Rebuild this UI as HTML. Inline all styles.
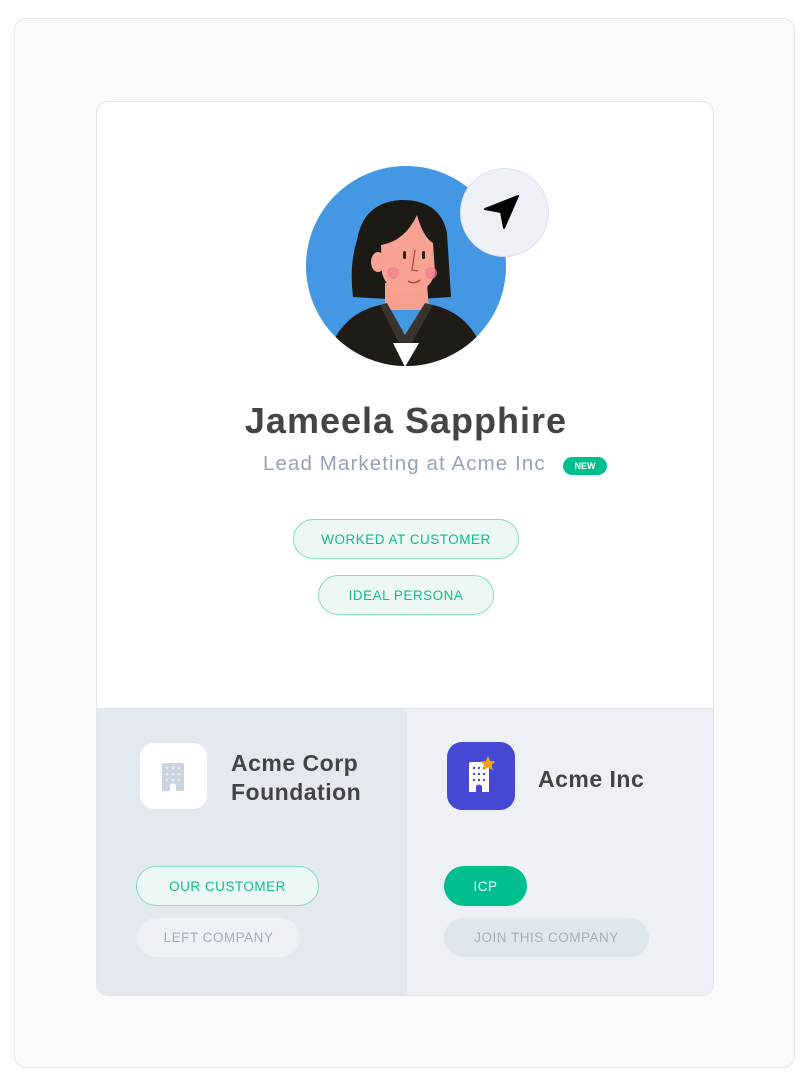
<!DOCTYPE html>
<html><head><meta charset="utf-8"><style>
*{box-sizing:border-box;margin:0;padding:0}
body{width:810px;height:1080px;background:#fff;font-family:"Liberation Sans",sans-serif;position:relative;overflow:hidden}
.frame{position:absolute;left:14px;top:18px;width:781px;height:1050px;background:#f9fafc;border:1px solid #e3e7ee;border-radius:12px}
.card{position:absolute;left:96px;top:101px;width:618px;height:895px;background:#fff;border:1px solid #e1e6ed;border-radius:12px;overflow:hidden}
.abs{position:absolute}
.pill{position:absolute;border-radius:20px;display:flex;align-items:center;justify-content:center;font-size:13.5px;letter-spacing:.5px}
.g{background:#edf7f4;border:1px solid #86dcc4;color:#14b98b}
.name{position:absolute;left:0;width:618px;text-align:center;top:298px;font-size:36px;font-weight:bold;color:#444;letter-spacing:1px}
.co{position:absolute;font-size:23px;font-weight:bold;color:#444;line-height:29px;letter-spacing:.5px}
</style></head><body>
<div class="frame"></div>
<div class="card">
  <svg class="abs" style="left:208px;top:63px" width="202" height="202" viewBox="0 0 202 202">
    <defs><clipPath id="c"><circle cx="101" cy="101" r="100"/></clipPath></defs>
    <g clip-path="url(#c)">
      <rect width="202" height="202" fill="#4397e3"/>
      <path d="M52 75 Q58 38 95 35 Q135 34 142 68 L146 132 L100 135 L48 132 Q44 100 52 75Z" fill="#1c1a14"/>
      <path d="M80 145 L80 118 L122 118 L124 145Z" fill="#f6a08f"/>
      <path d="M76 80 Q100 76 112 50 Q118 72 128 78 L130 108 Q124 128 104 128 Q82 127 77 108Z" fill="#f8a293"/>
      <ellipse cx="73" cy="97" rx="7" ry="10" fill="#f8a293"/>
      <rect x="98" y="86" width="3" height="8" rx="1.5" fill="#2a1f1a"/>
      <rect x="117" y="86" width="3" height="8" rx="1.5" fill="#2a1f1a"/>
      <path d="M110 85 L107 105 L113 106" stroke="#b04a40" stroke-width="1.3" fill="none"/>
      <circle cx="88" cy="108" r="6" fill="#f27b8a" opacity=".7"/>
      <circle cx="126" cy="108" r="6" fill="#f27b8a" opacity=".7"/>
      <path d="M103 116 Q109 120 115 115" stroke="#b04a40" stroke-width="1.5" fill="none"/>
      <path d="M20 202 Q30 150 75 140 L100 175 L128 140 Q172 150 182 202Z" fill="#1f1c17"/>
      <path d="M75 140 L100 190 L128 140 L120 138 L100 170 L82 138Z" fill="#38332c"/>
      <path d="M88 178 L100 202 L114 178Z" fill="#fff"/>
    </g>
  </svg>
  <div class="abs" style="left:363px;top:66px;width:89px;height:89px;border-radius:50%;background:#edf0f4;border:1px solid #dde3ea"></div>
  <svg class="abs" style="left:387px;top:92px" width="36" height="36" viewBox="0 0 36 36"><path d="M1 15 L34 2 L20 34 L17 18Z" fill="#000" stroke="#000" stroke-width="2" stroke-linejoin="round"/></svg>
  <div class="name">Jameela Sapphire</div>
  <div class="abs" style="left:166px;top:350px;font-size:20.5px;color:#97a3b5;letter-spacing:1.1px">Lead Marketing at Acme Inc</div>
  <div class="abs" style="left:466px;top:355px;width:44px;height:18px;border-radius:9px;background:#00bf8f;color:#fff;font-size:9px;font-weight:bold;display:flex;align-items:center;justify-content:center">NEW</div>
  <div class="pill g" style="left:196px;top:417px;width:226px;height:40px">WORKED AT CUSTOMER</div>
  <div class="pill g" style="left:221px;top:473px;width:176px;height:40px">IDEAL PERSONA</div>
  <div class="abs" style="left:0;top:606px;width:310px;height:289px;background:#e4e9f0;border-top:1px solid #dde3ea"></div>
  <div class="abs" style="left:310px;top:606px;width:308px;height:289px;background:#edf0f4;border-top:1px solid #dde3ea"></div>
  <div class="abs" style="left:43px;top:641px;width:67px;height:66px;border-radius:14px;background:#fff"></div>
  <svg class="abs" style="left:65px;top:661px" width="22" height="28" viewBox="0 0 22 28"><path d="M0 2 Q0 0 2 0 L20 0 Q22 0 22 2 L22 28 L14 28 L14 22 Q11 19 8 22 L8 28 L0 28Z" fill="#cbd3df"/><g fill="#e9edf2"><circle cx="5" cy="5" r="1.3"/><circle cx="11" cy="5" r="1.3"/><circle cx="17" cy="5" r="1.3"/><circle cx="5" cy="11" r="1.3"/><circle cx="11" cy="11" r="1.3"/><circle cx="17" cy="11" r="1.3"/><circle cx="5" cy="17" r="1.3"/><circle cx="11" cy="17" r="1.3"/><circle cx="17" cy="17" r="1.3"/></g></svg>
  <div class="co" style="left:134px;top:647px">Acme Corp<br>Foundation</div>
  <div class="abs" style="left:350px;top:640px;width:68px;height:68px;border-radius:15px;background:#4648d4"></div>
  <svg class="abs" style="left:370px;top:654px" width="30" height="36" viewBox="0 0 30 36"><path d="M2 8 Q2 6 4 6 L20 6 Q22 6 22 8 L22 36 L15 36 L15 30 Q12 27 9 30 L9 36 L2 36Z" fill="#fff"/><g fill="#4648d4"><circle cx="7" cy="12" r="1.2"/><circle cx="12" cy="12" r="1.2"/><circle cx="17" cy="12" r="1.2"/><circle cx="7" cy="18" r="1.2"/><circle cx="12" cy="18" r="1.2"/><circle cx="17" cy="18" r="1.2"/><circle cx="7" cy="24" r="1.2"/><circle cx="12" cy="24" r="1.2"/><circle cx="17" cy="24" r="1.2"/></g><path d="M21 0 L23.3 5 L28.5 5.5 L24.6 9 L25.7 14.2 L21 11.5 L16.3 14.2 L17.4 9 L13.5 5.5 L18.7 5Z" fill="#f7a11a"/></svg>
  <div class="co" style="left:441px;top:663px">Acme Inc</div>
  <div class="pill g" style="left:39px;top:764px;width:183px;height:40px">OUR CUSTOMER</div>
  <div class="pill" style="left:40px;top:816px;width:163px;height:39px;background:#edf0f4;color:#a5aebd">LEFT COMPANY</div>
  <div class="pill" style="left:347px;top:764px;width:83px;height:40px;background:#00bf8f;color:#fff">ICP</div>
  <div class="pill" style="left:347px;top:816px;width:205px;height:39px;background:#e0e6ee;color:#a5aebd">JOIN THIS COMPANY</div>
</div>
</body></html>
